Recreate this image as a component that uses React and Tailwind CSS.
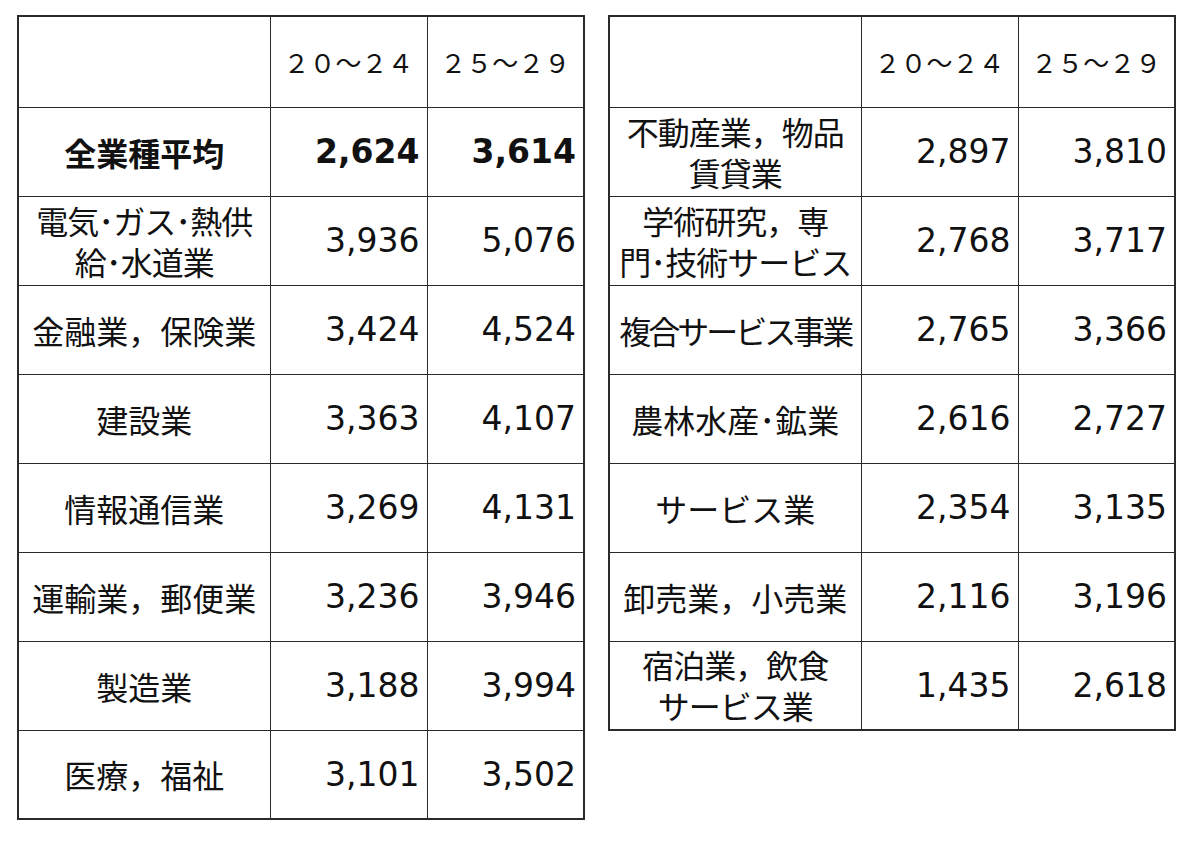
import React from 'react'

const jp = { fontFamily: '"Noto Sans CJK JP", "Noto Sans", sans-serif' }
const num = { fontFamily: '"DejaVu Sans", Verdana, sans-serif' }

const leftRows = [
  { name: '全業種平均', a: '2,624', b: '3,614', bold: true },
  { name: ['電気･ガス･熱供', '給･水道業'], a: '3,936', b: '5,076' },
  { name: '金融業，保険業', a: '3,424', b: '4,524' },
  { name: '建設業', a: '3,363', b: '4,107' },
  { name: '情報通信業', a: '3,269', b: '4,131' },
  { name: '運輸業，郵便業', a: '3,236', b: '3,946' },
  { name: '製造業', a: '3,188', b: '3,994' },
  { name: '医療，福祉', a: '3,101', b: '3,502' },
]

const rightRows = [
  { name: ['不動産業，物品', '賃貸業'], a: '2,897', b: '3,810' },
  { name: ['学術研究，専', '門･技術サービス'], a: '2,768', b: '3,717' },
  { name: '複合サービス事業', a: '2,765', b: '3,366', tight: true },
  { name: '農林水産･鉱業', a: '2,616', b: '2,727' },
  { name: 'サービス業', a: '2,354', b: '3,135' },
  { name: '卸売業，小売業', a: '2,116', b: '3,196' },
  { name: ['宿泊業，飲食', 'サービス業'], a: '1,435', b: '2,618' },
]

function WageTable({ rows }) {
  return (
    <table className="border-collapse border-2 border-[#2a2a2a] text-[#111] bg-white">
      <colgroup>
        <col className="w-[252px]" />
        <col className="w-[157px]" />
        <col className="w-[157px]" />
      </colgroup>
      <tbody>
        <tr className="h-[91px]">
          <td className="border border-[#2a2a2a]"></td>
          <td className="border border-[#2a2a2a] text-center text-[26px]" style={jp}>２０～２４</td>
          <td className="border border-[#2a2a2a] text-center text-[26px]" style={jp}>２５～２９</td>
        </tr>
        {rows.map((r, i) => (
          <tr key={i} className="h-[89px]">
            <td
              className={`border border-[#2a2a2a] px-0 text-center text-[32px] whitespace-nowrap ${r.bold ? 'font-bold' : ''} ${r.tight ? 'tracking-[-3px]' : ''}`}
              style={jp}
            >
              {Array.isArray(r.name) ? (
                <div className="flex flex-col items-center">
                  <div className="leading-[41px] h-[41px] tracking-[-1px]">{r.name[0]}</div>
                  <div className="leading-[41px] h-[41px] tracking-[-1px]">{r.name[1]}</div>
                </div>
              ) : (
                r.name
              )}
            </td>
            <td
              className={`border border-[#2a2a2a] text-right pr-[7px] text-[33px] ${r.bold ? 'font-bold' : ''}`}
              style={num}
            >
              {r.a}
            </td>
            <td
              className={`border border-[#2a2a2a] text-right pr-[7px] text-[33px] ${r.bold ? 'font-bold' : ''}`}
              style={num}
            >
              {r.b}
            </td>
          </tr>
        ))}
      </tbody>
    </table>
  )
}

export default function App() {
  return (
    <div className="w-[1200px] h-[845px] bg-white pt-[15px] pl-[17px] flex items-start gap-[23px]">
      <WageTable rows={leftRows} />
      <WageTable rows={rightRows} />
    </div>
  )
}
